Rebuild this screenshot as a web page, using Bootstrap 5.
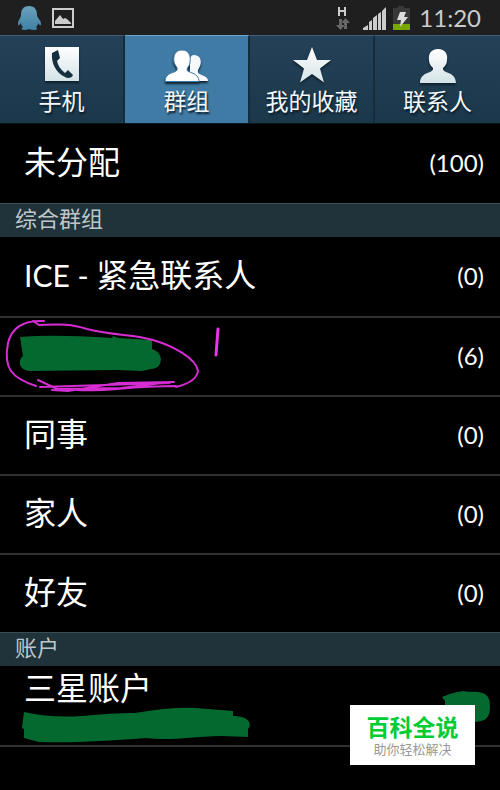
<!DOCTYPE html>
<html lang="zh-CN" data-bs-theme="dark">
<head>
<meta charset="utf-8">
<meta name="viewport" content="width=device-width, initial-scale=1">
<title>群组</title>
<link href="https://cdn.jsdelivr.net/npm/bootstrap@5.3.0/dist/css/bootstrap.min.css" rel="stylesheet">
<style>
body { background: #000; color: #fff; font-family: Lato, "Noto Sans CJK SC", sans-serif; }
svg { display: block; flex: none; }
.status-bar { background: #1f1f1f; height: 35px; color: #ccc; padding: 0 19px 0 16px; }
.clock { font-size: 24px; line-height: 32px; }
.tabs { height: 89px; border-bottom: 1px solid #0a141b; }
.tab-btn { border: 0; border-top: 1px solid #3d6078; border-right: 2px solid #142c3c; background: linear-gradient(#244158, #1b374a); color: #f4f8fa; font-size: 23px; line-height: 28px; padding: 9px 0 0; text-shadow: 1px 2px 2px #0a1a26; }
.tab-btn:last-child { border-right: 0; }
.tab-btn svg { filter: drop-shadow(0 2px 1px #0c1f2c); }
.tab-btn.active { background: #407ba5; border-top-color: #70a3c6; }
.entry { min-height: 79px; background: #000; color: #fff; border: 0; font-size: 32px; line-height: 40px; padding: 0 16px 4px 24px; text-align: left; }
.entry + .entry { border-top: 2px solid #303030; }
.latin { font-size: 30px; }
.tally { font-size: 24px; line-height: 32px; padding-top: 3px; }
.section-title { margin: 0; min-height: 34px; padding: 0 15px 3px; background: #20333b; border-top: 1px solid #3b4d54; color: #bfc6c9; font-size: 22px; line-height: 30px; font-weight: 400; }
.account { border-bottom: 2px solid #303030; padding: 2px 0 0 24px; min-height: 81px; }
.marking { position: absolute; left: 0; top: 0; pointer-events: none; }
.marking-end { position: absolute; right: 0; top: 0; pointer-events: none; }
.source-tag { position: absolute; right: 25px; bottom: -18px; width: 125px; height: 60px; background: #fff; color: #999; font-size: 13px; line-height: 16px; z-index: 2; }
.source-tag strong { color: #0c3; font-size: 23px; line-height: 28px; }
</style>
<script src="https://cdn.jsdelivr.net/npm/bootstrap@5.3.0/dist/js/bootstrap.bundle.min.js"></script>
</head>
<body class="min-vh-100">
<header class="status-bar d-flex align-items-center justify-content-between">
  <div class="d-flex align-items-center gap-2">
    <svg width="28" height="26" viewBox="0 0 28 26" aria-label="QQ"><defs><linearGradient id="qq" x2="0" y2="1"><stop stop-color="#69a2bc"/><stop offset="1" stop-color="#3f80a5"/></linearGradient></defs><path fill="url(#qq)" d="M13 1C7 1 5 5 5 10c0 3-3 5-3 9 0 2 1 2 3-1 0 2 1 3 2 4-3 2-1 3 2 3 2 0 4-1 4-1s2 1 5 1 4-1 2-3c1-1 2-2 2-4 2 3 3 3 3 1 0-4-4-6-4-9 0-5-2-9-8-9z"/></svg>
    <svg width="22" height="20" viewBox="0 0 22 20" aria-label="图片"><path fill="none" stroke="#ccc" stroke-width="2" d="M1 1h20v18H1z"/><path fill="#ccc" d="M3 16v-3l5-6 3 4 2-1 2 1 4 4v1z"/></svg>
  </div>
  <div class="d-flex align-items-center gap-2">
    <svg width="76" height="26" viewBox="0 0 76 26" aria-label="信号和电池"><path fill="none" stroke="#ccc" stroke-width="2" d="M4 2v9M10 2v9M4 6h6"/><path fill="#686868" d="M4 14h3v6h3l-4.500 5L1 20h3zM9 24h3v-6h3l-4.500-5L6 18h3z"/><path fill="#ccc" d="M28 25v-2l5-3v5zM34 25v-8l3-2v10zM38 25V13l4-3v15zM43 25V9l3-2v18zM47 25V6l4-4v23z"/><path fill="#383838" d="M63 1h6v2h6v16H58V3h5z"/><path fill="#78a800" d="M58 19h17v6H58z"/><path fill="#ddd" d="M65 7h6l-2 5h4l-8 10 1-7h-4z"/></svg>
    <time class="clock">11:20</time>
  </div>
</header>

<nav class="tabs row row-cols-4 g-0">
  <button type="button" class="tab-btn col d-flex flex-column align-items-center gap-1"><svg width="36" height="38" viewBox="0 0 36 38"><defs><linearGradient id="ice" x2="0" y2="1"><stop stop-color="#fff"/><stop offset="1" stop-color="#d4e3e7"/></linearGradient></defs><path fill="url(#ice)" d="M1 2h34v34H1z"/><path fill="#17303f" d="M8 8l6-3 2 8-3 3c1 5 4 9 8 12l3-3 5 5c-1 3-5 4-8 2C12 28 7 18 8 8z"/></svg>手机</button>
  <button type="button" class="tab-btn active col d-flex flex-column align-items-center gap-1"><svg width="44" height="38" viewBox="0 0 44 38"><path fill="#f5f9fb" d="M29 10c8 0 8 9 5 13-3 5 0 6 5 8 3 1 4 3 4 5H25V18c-1-5 1-8 4-8z"/><path fill="#fff" stroke="#407ba5" stroke-width="1" d="M17 5c-7 0-9 6-8 12 1 4 4 5 3 8-1 3-12 2-12 11.500h34c0-9.500-12-8.500-12-11.500 0-3 3-4 3-8 1-6-1-12-8-12z"/></svg>群组</button>
  <button type="button" class="tab-btn col d-flex flex-column align-items-center gap-1"><svg width="38" height="38" viewBox="0 0 38 38"><path fill="url(#ice)" d="M19 2l5 13h14L27 23.500l4 14L19 29 7 37.500l4-14L0 15h14z"/></svg>我的收藏</button>
  <button type="button" class="tab-btn col d-flex flex-column align-items-center gap-1"><svg width="38" height="38" viewBox="0 0 38 38"><path fill="url(#ice)" d="M19 4c-7 0-10 5-9 11 0 4 2 6 4 8 1 6-13 3-13 15h36c0-12-14-9-13-15 2-2 4-4 4-8 1-6-2-11-9-11z"/></svg>联系人</button>
</nav>

<main>
  <div class="d-grid">
    <button type="button" class="entry d-flex align-items-center justify-content-between"><span>未分配</span><span class="tally">(100)</span></button>
  </div>
  <h2 class="section-title">综合群组</h2>
  <div class="d-grid">
    <button type="button" class="entry d-flex align-items-center justify-content-between"><span><span class="latin">ICE - </span>紧急联系人</span><span class="tally">(0)</span></button>
    <button type="button" class="entry position-relative d-flex align-items-center justify-content-end" aria-label="群组 6">
      <svg class="marking" width="230" height="76" viewBox="0 0 230 76">
        <path fill="#03692f" d="M20 19q34-3 92 1l1-2 5 2 34 2v9c13 4 11 20-1 20l-9 2-26-1-86 1c-12-1-12-11-7-15z"/>
        <g fill="none" stroke="#d52dd2" stroke-width="2" stroke-linecap="round"><path d="M44 3C25 2 12 8 8 25c-5 26 4 35 28 43M33 3l6 4c25-1 32-1 48 4 28 7 47 5 66 11 20 6 43 18 45 31-1 8-10 13-22 16M38 62l19 9 64-1 50-6M40 69l130-4M52 72l16 1 50-8 56-1M77 72c31 2 48-4 99-4"/><path stroke="#ee32ed" stroke-width="3" d="M218 11l-2 26"/></g>
      </svg>
      <span class="tally">(6)</span>
    </button>
    <button type="button" class="entry d-flex align-items-center justify-content-between"><span>同事</span><span class="tally">(0)</span></button>
    <button type="button" class="entry d-flex align-items-center justify-content-between"><span>家人</span><span class="tally">(0)</span></button>
    <button type="button" class="entry d-flex align-items-center justify-content-between"><span>好友</span><span class="tally">(0)</span></button>
  </div>
  <h2 class="section-title">账户</h2>
  <div class="position-relative d-grid">
    <button type="button" class="entry account d-flex align-items-start">
      <span>三星账户</span>
      <svg class="marking" width="260" height="79" viewBox="0 0 260 79"><path fill="#03692f" d="M24 46q27 6 58 4 30-3 53-3 35-6 61-5l37 3v5c17 0 19 9 15 13v8l-26-1c-35 1-50 5-76 2-42 3-71 5-107 4l-15-4v-9l-2-1z"/></svg>
      <svg class="marking-end" width="60" height="79" viewBox="0 0 60 79"><path fill="#03692f" d="M2 31c12-5 22-7 27-5 17-1 21 4 21 14 0 12-4 15-15 16H5V35z"/></svg>
    </button>
    <aside class="source-tag d-flex flex-column align-items-center justify-content-center"><strong>百科全说</strong><span>助你轻松解决</span></aside>
  </div>
</main>
</body>
</html>
